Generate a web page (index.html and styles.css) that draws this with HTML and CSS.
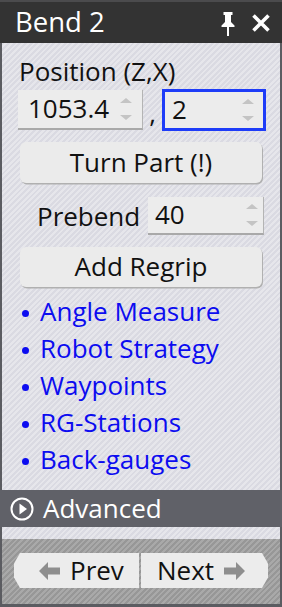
FILE: index.html
```html
<!DOCTYPE html>
<html>
<head>
<meta charset="utf-8">
<link rel="stylesheet" href="styles.css">
</head>
<body>
<div class="window">
  <div class="titlebar">
    <span class="title">Bend 2</span>
    <span class="title-icons">
      <svg class="pin" width="14" height="24" viewBox="0 0 14 24">
        <path d="M2.5 0h9v3h-1.5v7l3.5 3.5v1.5H0.5v-1.5L4 10V3H2.5z" fill="#fff"/>
        <rect x="6" y="15" width="2" height="9" fill="#fff"/>
      </svg>
      <svg class="close" width="20" height="18" viewBox="0 0 20 18">
        <path d="M2.5 1.5L17.5 16.5M17.5 1.5L2.5 16.5" stroke="#fff" stroke-width="3.6"/>
      </svg>
    </span>
  </div>
  <div class="content">
    <div class="label">Position (Z,X)</div>
    <div class="pos-row">
      <div class="spin spin-z"><span class="val">1053.4</span><span class="arrows"><i class="up"></i><i class="down"></i></span></div>
      <span class="comma">,</span>
      <div class="spin spin-x"><span class="val">2</span><span class="arrows"><i class="up"></i><i class="down"></i></span></div>
    </div>
    <div class="btn btn-turn">Turn Part (!)</div>
    <div class="prebend-row">
      <span class="prebend-label">Prebend</span>
      <div class="spin spin-p"><span class="val">40</span><span class="arrows"><i class="up"></i><i class="down"></i></span></div>
    </div>
    <div class="btn btn-regrip">Add Regrip</div>
    <ul class="links">
      <li>Angle Measure</li>
      <li>Robot Strategy</li>
      <li>Waypoints</li>
      <li>RG-Stations</li>
      <li>Back-gauges</li>
    </ul>
  </div>
  <div class="advanced">
    <svg width="24" height="24" viewBox="0 0 24 24"><circle cx="12" cy="12" r="10.5" fill="none" stroke="#fff" stroke-width="2"/><path d="M9.5 6.5v11l7.5-5.5z" fill="#fff"/></svg>
    <span>Advanced</span>
  </div>
  <div class="gap"></div>
  <div class="footer">
    <div class="nav prev">
      <svg width="21" height="18" viewBox="0 0 21 18"><path d="M0 9L9 0v5.5h12v7H9V18z" fill="#8e8e8e"/></svg>
      <span>Prev</span>
    </div>
    <div class="nav next">
      <span>Next</span>
      <svg width="21" height="18" viewBox="0 0 21 18"><path d="M21 9L12 0v5.5H0v7h12V18z" fill="#8e8e8e"/></svg>
    </div>
  </div>
</div>
</body>
</html>
```

FILE: styles.css
```css
* { box-sizing: border-box; }
html, body { margin: 0; padding: 0; }
body {
  width: 282px;
  height: 607px;
  font-family: "Open Sans", "Noto Sans", sans-serif;
  font-size: 26px;
  color: #111;
  overflow: hidden;
}
.window {
  width: 282px;
  height: 607px;
  display: flex;
  flex-direction: column;
  background: #5b5c61;
  padding: 0 2px 3px 2px;
}
.titlebar {
  flex: none;
  height: 43px;
  margin: 0 -2px;
  background: #333333;
  border-top: 2px solid #4b4b4d;
  display: flex;
  align-items: center;
  justify-content: space-between;
  padding: 0 11px 0 15px;
  color: #fff;
}
.title {
  font-size: 27.5px;
  line-height: 30px;
  margin-top: -1px;
}
.title-icons {
  display: flex;
  align-items: center;
  gap: 16px;
  margin-top: 1px;
}
.pin { margin-top: 1px; }
.content, .gap {
  background-color: #dddde5;
  background-image: repeating-linear-gradient(135deg, #dadae2 0 2px, #e6e6eb 2px 4px);
}
.content {
  flex: 1;
  display: flex;
  flex-direction: column;
  padding: 13px 16px 0 16px;
}
.label {
  line-height: 30px;
  margin-left: 1px;
}
.pos-row {
  display: flex;
  align-items: center;
  margin-top: 3px;
}
.spin {
  background: #ececec;
  border-right: 1px solid #b4b4b4;
  border-bottom: 2px solid #a9a9a9;
  display: flex;
  align-items: center;
  justify-content: space-between;
  height: 40px;
  line-height: 36px;
}
.spin .val { margin-top: -2px; }
.spin-z { width: 125px; padding: 0 10px 0 10px; }
.comma {
  width: 19px;
  text-align: center;
  line-height: 30px;
  margin-top: 6px;
}
.spin-x {
  width: 104px;
  height: 42px;
  border: 3px solid #1e3cf8;
  padding: 0 9px 0 7px;
  margin-right: -2px;
}
.arrows {
  display: flex;
  flex-direction: column;
  gap: 12px;
}
.arrows i {
  width: 0; height: 0;
  border-left: 6px solid transparent;
  border-right: 6px solid transparent;
}
.arrows .up { border-bottom: 5px solid #c4c4c4; }
.arrows .down { border-top: 5px solid #c4c4c4; }
.btn {
  margin: 0 2px;
  height: 41px;
  background: #ebebeb;
  border-radius: 6px;
  box-shadow: 1px 1.5px 0 #b0b0b0;
  display: flex;
  align-items: center;
  justify-content: center;
  line-height: 30px;
  padding-bottom: 2px;
}
.btn-turn { margin-top: 11px; }
.btn-regrip { margin-top: 12px; height: 40px; }
.prebend-row {
  display: flex;
  align-items: center;
  margin-top: 14px;
  margin-left: 19px;
}
.prebend-label { width: 111px; line-height: 30px; }
.spin-p { width: 116px; height: 38px; padding: 0 5px 0 7px; }
.links {
  list-style: none;
  margin: 6px 0 0 0;
  padding: 0;
  color: #0c0cf0;
}
.links li {
  height: 37px;
  line-height: 37px;
  display: flex;
  align-items: center;
}
.links li::before {
  content: "";
  flex: none;
  width: 7px; height: 7px;
  border-radius: 50%;
  background: #0c0cf0;
  margin: 3px 11px 0 4px;
}
.advanced {
  flex: none;
  height: 37px;
  margin: 0 -2px;
  background: #606168;
  display: flex;
  align-items: center;
  gap: 9px;
  padding-left: 10px;
  color: #fff;
  line-height: 30px;
}
.advanced span { margin-top: -2px; }
.gap { flex: none; height: 12px; }
.footer {
  flex: none;
  height: 65px;
  background-color: #a0a0a0;
  background-image: repeating-linear-gradient(135deg, #979797 0 2px, #a9a9a9 2px 4px);
  display: flex;
  align-items: flex-start;
  padding: 14px 0 0 12px;
  gap: 2px;
}
.nav {
  height: 35px;
  background: #ececec;
  display: flex;
  align-items: center;
  line-height: 30px;
  gap: 10px;
}
.nav span { margin-top: -2px; }
.prev {
  width: 125px;
  clip-path: polygon(0 30%, 6px 0, 100% 0, 100% 100%, 6px 100%, 0 70%);
  padding-left: 25px;
}
.next {
  width: 127px;
  clip-path: polygon(0 0, calc(100% - 6px) 0, 100% 30%, 100% 70%, calc(100% - 6px) 100%, 0 100%);
  padding-left: 16px;
}
```
